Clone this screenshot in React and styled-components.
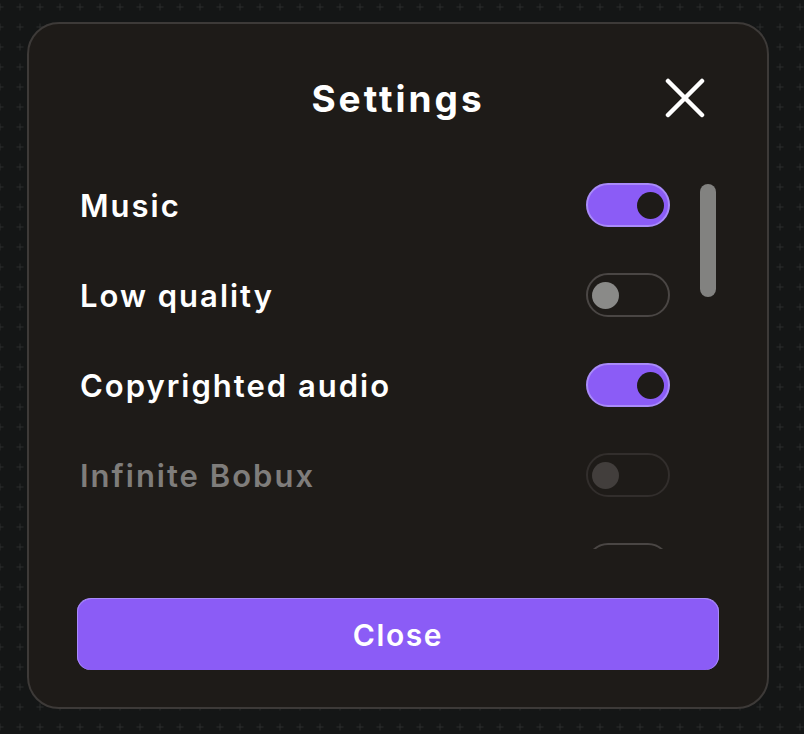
import React, { useState } from 'react';
import styled, { createGlobalStyle } from 'styled-components';

const colors = {
  page: '#141616',
  plus: '#2a2c2c',
  panel: '#1e1b18',
  panelBorder: '#3d3a38',
  white: '#ffffff',
  violet: '#8b5cf6',
  violetEdge: '#a98bfa',
  grey: '#7f7d7b',
  knobOff: '#8a8a88',
  offBorder: '#4a4644',
  mutedBorder: '#322e2c',
  mutedKnob: '#423e3c',
  thumb: '#828280',
};

const plusTile = encodeURIComponent(
  `<svg xmlns="http://www.w3.org/2000/svg" width="20" height="20"><path d="M10 6.5v7M6.5 10h7" stroke="${colors.plus}" stroke-width="1"/></svg>`,
);

const GlobalStyle = createGlobalStyle`
  html, body {
    margin: 0;
    padding: 0;
    background-color: ${colors.page};
    background-image: url("data:image/svg+xml,${plusTile}");
    background-position: -10px -3px;
    font-family: Inter, "Noto Sans", sans-serif;
  }
  * { box-sizing: border-box; }
`;

const Page = styled.div`
  width: 804px;
  height: 734px;
  padding: 22px 35px 25px 27px;
`;

const Panel = styled.section`
  width: 742px;
  height: 687px;
  background: ${colors.panel};
  border: 2px solid ${colors.panelBorder};
  border-radius: 32px;
  padding: 0 48px 37px;
  display: flex;
  flex-direction: column;
`;

const Header = styled.header`
  display: grid;
  grid-template-columns: 1fr auto 1fr;
  align-items: center;
  height: 76px;
  margin-top: 36px;
`;

const Title = styled.h1`
  grid-column: 2;
  margin: 0;
  color: ${colors.white};
  font-size: 37px;
  font-weight: 700;
  letter-spacing: 3px;
`;

const CloseIcon = styled.button`
  grid-column: 3;
  justify-self: end;
  width: 40px;
  height: 40px;
  margin-right: 14px;
  padding: 0;
  border: 0;
  background: none;
  cursor: pointer;
  display: flex;
  align-items: center;
  justify-content: center;
`;

const Body = styled.div`
  display: flex;
  height: 389px;
  margin-top: 24px;
`;

const List = styled.ul`
  flex: 1;
  list-style: none;
  margin: 0;
  padding: 0;
  overflow: hidden;
`;

const Row = styled.li`
  display: flex;
  align-items: center;
  justify-content: space-between;
  height: 90px;
  padding-left: 3px;
`;

const Label = styled.span`
  color: ${p => (p.$disabled ? colors.grey : colors.white)};
  font-size: 31px;
  font-weight: 600;
  letter-spacing: 2px;
`;

const Switch = styled.button`
  width: 84px;
  height: 44px;
  padding: 0 4px;
  border-radius: 22px;
  border: 2px solid ${p => (p.$on ? colors.violetEdge : p.disabled ? colors.mutedBorder : colors.offBorder)};
  background: ${p => (p.$on ? colors.violet : 'transparent')};
  cursor: ${p => (p.disabled ? 'default' : 'pointer')};
  display: flex;
  align-items: center;
  justify-content: ${p => (p.$on ? 'flex-end' : 'flex-start')};
`;

const Knob = styled.span`
  width: 27px;
  height: 27px;
  border-radius: 50%;
  background: ${p => (p.$on ? colors.panel : p.$disabled ? colors.mutedKnob : colors.knobOff)};
`;

const Track = styled.div`
  width: 16px;
  margin: 0 3px 0 30px;
  padding-top: 24px;
`;

const Thumb = styled.div`
  height: 113px;
  border-radius: 8px;
  background: ${colors.thumb};
`;

const CloseButton = styled.button`
  margin-top: auto;
  height: 72px;
  width: 100%;
  border-radius: 14px;
  border: 0;
  border-top: 1px solid ${colors.violetEdge};
  box-shadow: inset 1px 0 0 ${colors.violetEdge}, inset -1px 0 0 ${colors.violetEdge};
  background: ${colors.violet};
  color: ${colors.white};
  font-family: inherit;
  font-size: 30px;
  font-weight: 600;
  letter-spacing: 1.6px;
  cursor: pointer;
`;

const initial = [
  { id: 'music', label: 'Music', on: true },
  { id: 'low', label: 'Low quality', on: false },
  { id: 'copy', label: 'Copyrighted audio', on: true },
  { id: 'bobux', label: 'Infinite Bobux', on: false, disabled: true },
  { id: 'extra', label: 'Dark mode', on: false },
];

const App = () => {
  const [settings, setSettings] = useState(initial);
  const toggle = id => setSettings(list => list.map(s => (s.id === id ? { ...s, on: !s.on } : s)));

  return (
    <Page>
      <GlobalStyle />
      <Panel>
        <Header>
          <Title>Settings</Title>
          <CloseIcon aria-label="Close">
            <svg width="40" height="40" viewBox="0 0 40 40">
              <path d="M3 3L37 37M37 3L3 37" stroke="#fff" strokeWidth="4.5" strokeLinecap="round" />
            </svg>
          </CloseIcon>
        </Header>
        <Body>
          <List>
            {settings.map(s => (
              <Row key={s.id}>
                <Label $disabled={s.disabled}>{s.label}</Label>
                <Switch $on={s.on} disabled={s.disabled} onClick={() => toggle(s.id)}>
                  <Knob $on={s.on} $disabled={s.disabled} />
                </Switch>
              </Row>
            ))}
          </List>
          <Track>
            <Thumb />
          </Track>
        </Body>
        <CloseButton>Close</CloseButton>
      </Panel>
    </Page>
  );
};

export default App;
